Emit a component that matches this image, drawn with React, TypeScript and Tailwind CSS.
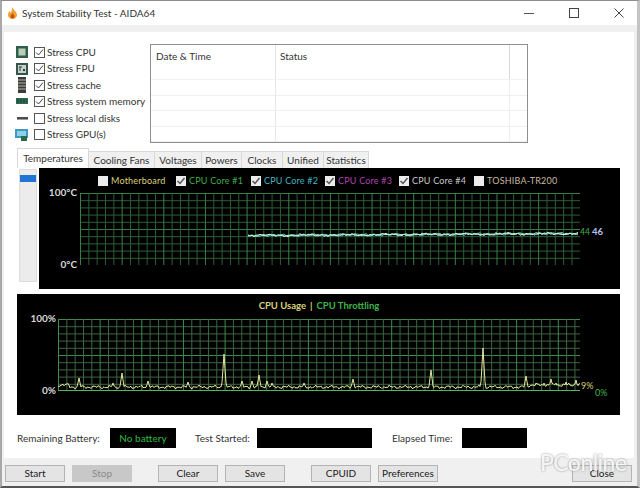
const FONT = { fontFamily: 'Lato, Roboto, sans-serif' };

const stressItems = [
  { label: "Stress CPU", checked: true, icon: "cpu" },
  { label: "Stress FPU", checked: true, icon: "fpu" },
  { label: "Stress cache", checked: true, icon: "cache" },
  { label: "Stress system memory", checked: true, icon: "memory" },
  { label: "Stress local disks", checked: false, icon: "disk" },
  { label: "Stress GPU(s)", checked: false, icon: "gpu" },
];

const tabs = [
  { label: "Cooling Fans", width: "w-[66px]" },
  { label: "Voltages", width: "w-[47px]" },
  { label: "Powers", width: "w-[40px]" },
  { label: "Clocks", width: "w-[41px]" },
  { label: "Unified", width: "w-[41px]" },
  { label: "Statistics", width: "w-[45px]" },
];

const legend = [
  { label: "Motherboard", checked: false, color: "text-[#d8d27a]", width: "w-[78px]" },
  { label: "CPU Core #1", checked: true, color: "text-[#3fae4c]", width: "w-[75px]" },
  { label: "CPU Core #2", checked: true, color: "text-[#45b5c0]", width: "w-[74px]" },
  { label: "CPU Core #3", checked: true, color: "text-[#b044b0]", width: "w-[74px]" },
  { label: "CPU Core #4", checked: true, color: "text-[#c8c8c8]", width: "w-[75px]" },
  { label: "TOSHIBA-TR200", checked: false, color: "text-[#c8b8a0]", width: "w-[90px]" },
];

function StressIcon({ kind }: { kind: string }) {
  if (kind === "cpu")
    return (
      <svg width="14" height="14" viewBox="0 0 14 14">
        <rect x="1" y="1" width="12" height="12" fill="#2f5f4a" />
        <rect x="3.5" y="3.5" width="7" height="7" fill="#b9cdb8" />
      </svg>
    );
  if (kind === "fpu")
    return (
      <svg width="14" height="14" viewBox="0 0 14 14">
        <rect x="1" y="1" width="12" height="12" fill="#35554c" />
        <rect x="3" y="3" width="8" height="8" fill="#c5d2cc" />
        <path d="M4 5h3M5 5v4M8 7l2 2M10 7l-2 2" stroke="#2c3c38" strokeWidth="1" fill="none" />
      </svg>
    );
  if (kind === "cache")
    return (
      <svg width="14" height="16" viewBox="0 0 14 16">
        <rect x="3" y="0" width="8" height="16" fill="#3b3b3b" />
        <path d="M3 3h8M3 6h8M3 9h8M3 12h8" stroke="#b5b5a8" strokeWidth="1" />
      </svg>
    );
  if (kind === "memory")
    return (
      <svg width="14" height="10" viewBox="0 0 14 10">
        <rect x="1" y="1" width="12" height="6" fill="#2f6a52" />
        <path d="M2 3h10M2 5h10" stroke="#1c3a30" strokeWidth="1" strokeDasharray="2 1" />
      </svg>
    );
  if (kind === "disk")
    return (
      <svg width="14" height="8" viewBox="0 0 14 8">
        <rect x="2" y="3" width="11" height="3" fill="#4b4b4b" />
        <rect x="2" y="5" width="11" height="1" fill="#9a9a9a" />
      </svg>
    );
  return (
    <svg width="14" height="14" viewBox="0 0 14 14">
      <rect x="0" y="1" width="13" height="9" fill="#3c9ac4" />
      <rect x="2" y="3" width="9" height="5" fill="#8fd0e6" />
      <rect x="6" y="8" width="6" height="5" fill="#2a6b4c" />
    </svg>
  );
}

function Checkbox({ checked, dark }: { checked: boolean; dark?: boolean }) {
  if (dark) {
    return (
      <span className="w-[10px] h-[10px] bg-[#ececec] flex items-center justify-center shrink-0">
        {checked && (
          <svg width="10" height="10" viewBox="0 0 10 10">
            <path d="M1.5 5l2.5 2.5L8.5 2" stroke="#555" strokeWidth="1.5" fill="none" />
          </svg>
        )}
      </span>
    );
  }
  return (
    <span className="w-[11px] h-[11px] border border-[#555] bg-white flex items-center justify-center shrink-0">
      {checked && (
        <svg width="9" height="9" viewBox="0 0 9 9">
          <path d="M1 4.5l2.5 2.5L8 1.5" stroke="#444" strokeWidth="1" fill="none" />
        </svg>
      )}
    </span>
  );
}

function GridLines({ w, h, dx, dy, color, strong }: { w: number; h: number; dx: number; dy: number; color: string; strong: string }) {
  const xs: number[] = [];
  for (let x = 0.5; x <= w; x += dx) xs.push(x);
  const ys: number[] = [];
  for (let y = 0.5; y <= h; y += dy) ys.push(y);
  return (
    <g strokeWidth="1">
      {ys.map((y, i) => (
        <line key={"h" + i} x1="0" x2={w} y1={y} y2={y} stroke={i % 5 === 0 ? strong : color} />
      ))}
      {xs.map((x, i) => (
        <line key={"v" + i} x1={x} x2={x} y1="0" y2={h} stroke={i % 5 === 0 ? strong : color} />
      ))}
    </g>
  );
}

// small repeatable wobble so the traces look like sensor data
function wobble(i: number) {
  return Math.sin(i * 1.7) * 0.5 + Math.sin(i * 0.61 + 1) * 0.5 + Math.sin(i * 3.3) * 0.4;
}

function tempTrace(offset: number) {
  let d = "";
  for (let x = 168; x <= 499; x += 2) {
    const y = 42.5 - (x - 168) * 0.006 + wobble(x + offset) * 1.2;
    d += (d ? "L" : "M") + x + " " + y.toFixed(1);
  }
  return d;
}

const spikes: [number, number][] = [
  [21, 12], [55, 7], [64, 17], [90, 9], [130, 8], [166, 36], [184, 9], [194, 9], [201, 15], [209, 9], [214, 7],
  [246, 7], [295, 11], [373, 20], [425, 42], [468, 14], [478, 7], [486, 7], [493, 11], [498, 7], [508, 8], [518, 10],
];

function cpuTrace() {
  let d = "";
  for (let x = 0; x <= 522; x += 1) {
    let y = 68 + wobble(x * 0.7) * 1.5;
    if (x < 12 || x > 470) y -= 2;
    for (const [sx, sh] of spikes) {
      const dist = Math.abs(x - sx);
      if (dist < 2.5) y = Math.min(y, 71 - sh * (1 - dist / 2.5));
    }
    d += (d ? "L" : "M") + x + " " + y.toFixed(1);
  }
  return d;
}

function Field({ label, value, box, labelWidth }: { label: string; value?: string; box: string; labelWidth: string }) {
  return (
    <div className="flex items-center">
      <span className={`${labelWidth} whitespace-nowrap text-[10px] text-[#333]`}>{label}</span>
      <div className={`${box} h-[20px] bg-black flex items-center justify-center text-[10px] font-medium text-[#2fae3f]`}>{value}</div>
    </div>
  );
}

function Btn({ label, disabled, className }: { label: string; disabled?: boolean; className?: string }) {
  return (
    <div
      className={`w-[60px] h-[17px] flex items-center justify-center border text-[10px] ${
        disabled ? "bg-[#c8c8c8] border-[#c8c8c8] text-[#8a8a8a]" : "bg-[#e4e4e4] border-[#b4b4b4] text-[#222]"
      } ${className ?? ""}`}
    >
      {label}
    </div>
  );
}

export default function App() {
  return (
    <div style={FONT} className="relative w-[640px] h-[488px] overflow-hidden bg-[#f0f0f0] border-l-2 border-r-[3px] border-t border-b-2 border-l-[#a8a8a8] border-r-[#c4c4c4] border-t-[#8c8c8c] border-b-[#555] flex flex-col">
      {/* Title bar */}
      <div className="h-[24px] shrink-0 bg-white flex items-center pl-[5px] text-[10px] text-[#333]">
        <svg width="11" height="12" viewBox="0 0 11 12">
          <path d="M5.5 0C6 3 10 4.5 10 8a4.5 4 0 0 1-9 0c0-2 1-3 1.5-4 .5 1 1 1.5 1.5 1.5C4.500 4 5 2 5.500 0z" fill="#f0a030" />
          <path d="M5.500 6c.5 1 2 2 2 3.500a2 2 0 0 1-4 0C3.500 8 5 7.500 5.500 6z" fill="#c8501c" />
        </svg>
        <span className="ml-[4px]">System Stability Test - AIDA64</span>
        <div className="ml-auto flex items-center">
          <svg width="12" height="12" viewBox="0 0 12 12" className="mr-[33px]"><path d="M1 6.500h10" stroke="#555" /></svg>
          <svg width="12" height="12" viewBox="0 0 12 12" className="mr-[33px]"><rect x="1.500" y="1.500" width="9" height="9" fill="none" stroke="#444" /></svg>
          <svg width="12" height="12" viewBox="0 0 12 12" className="mr-[12px]"><path d="M1.500 1.500l9 9M10.500 1.500l-9 9" stroke="#444" /></svg>
        </div>
      </div>

      {/* Main body */}
      <div className="h-[7px] shrink-0" />
      <div className="h-[426px] shrink-0 bg-white ml-[2px] mr-[3px] flex flex-col">
        {/* Top section: stress options and log */}
        <div className="h-[116px] shrink-0 flex pt-[12px]">
          <div className="w-[146px] shrink-0 pl-[9px] flex flex-col">
            {stressItems.map((item) => (
              <div key={item.label} className="h-[16.500px] flex items-center text-[10px] text-[#333]">
                <span className="w-[18px] flex items-center justify-center shrink-0">
                  <StressIcon kind={item.icon} />
                </span>
                <span className="ml-[3px]">
                  <Checkbox checked={item.checked} />
                </span>
                <span className="ml-[2px] whitespace-nowrap">{item.label}</span>
              </div>
            ))}
          </div>
          <div className="w-[378px] h-[99px] border border-[#8f8f8f] flex flex-col">
            <div className="h-[35px] flex text-[10px] text-[#333] border-b border-[#f2f2f2]">
              <span className="w-[125px] pl-[5px] pt-[4px] border-r border-[#e4e4e4]">Date &amp; Time</span>
              <span className="w-[234px] pl-[4px] pt-[4px] border-r border-[#d8d8d8]">Status</span>
            </div>
            {[0, 1, 2, 3].map((i) => (
              <div key={i} className="h-[15.500px] flex border-b border-[#efefef]">
                <span className="w-[125px] border-r border-[#e8e8e8]" />
                <span className="w-[234px] border-r border-[#eeeeee]" />
              </div>
            ))}
          </div>
        </div>

        {/* Tabs */}
        <div className="h-[19px] shrink-0 flex items-end pl-[13px] mt-[1px] text-[10px] text-[#333] whitespace-nowrap">
          <div className="w-[72px] h-[20px] bg-white border-t border-l border-r border-[#d8d8d8] flex items-center justify-center">Temperatures</div>
          {tabs.map((t) => (
            <div key={t.label} className={`${t.width} h-[17px] bg-[#f0f0f0] border-t border-r border-[#d8d8d8] flex items-center justify-center`}>
              {t.label}
            </div>
          ))}
        </div>

        {/* Temperature panel */}
        <div className="h-[121px] shrink-0 flex pl-[15px]">
          <div className="w-[20px] shrink-0 pt-[1px]">
            <div className="w-[18px] h-[113px] bg-[#ececec] border border-[#dcdcdc]">
              <div className="mt-[5px] h-[7px] bg-[#1f74d4]" />
            </div>
          </div>
          <div className="relative w-[581px] h-[121px] bg-black">
            <div className="h-[25px] flex items-center pl-[59px] text-[9px] tracking-[0.2px] whitespace-nowrap">
              {legend.map((l) => (
                <div key={l.label} className={`${l.width} flex items-center`}>
                  <Checkbox checked={l.checked} dark />
                  <span className={`ml-[3px] ${l.color}`}>{l.label}</span>
                </div>
              ))}
            </div>
            <div className="flex">
              <div className="w-[41px] h-[82px] flex flex-col justify-between items-end pr-[3px] text-[10px] leading-none text-[#d8d8d8] font-bold -mt-[6px]">
                <span>100°C</span>
                <span>0°C</span>
              </div>
              <svg width="501" height="73" viewBox="0 0 501 73" className="block">
                <GridLines w={500} h={72} dx={8.33} dy={7.2} color="#2c5f35" strong="#3a8046" />
                <path d={tempTrace(0)} stroke="#e8e8e8" fill="none" strokeWidth="1" />
                <path d={tempTrace(9)} stroke="#55d0c0" fill="none" strokeWidth="1" />
                <path d={tempTrace(23)} stroke="#c8f0d8" fill="none" strokeWidth="1" />
              </svg>
            </div>
            <span className="absolute left-[541px] top-[60px] text-[8.500px] leading-none text-[#3fae4c]">44</span>
            <span className="absolute left-[553px] top-[59px] text-[9.500px] leading-none font-bold text-[#b8c4ee]">46</span>
          </div>
        </div>

        {/* CPU usage panel */}
        <div className="relative h-[121px] w-[603px] shrink-0 ml-[13px] mt-[5px] bg-black">
          <div className="h-[25px] flex items-center justify-center text-[9.500px] font-bold whitespace-nowrap pl-[1px]">
            <span className="text-[#d8d27a]">CPU Usage</span>
            <span className="text-[#d8d27a] mx-[4px]">|</span>
            <span className="text-[#3fb54c]">CPU Throttling</span>
          </div>
          <div className="flex">
            <div className="w-[41px] h-[82px] flex flex-col justify-between items-end pr-[2px] text-[10px] leading-none text-[#d8d8d8] font-bold -mt-[6px]">
              <span>100%</span>
              <span>0%</span>
            </div>
            <svg width="523" height="73" viewBox="0 0 523 73" className="block">
              <GridLines w={522} h={72} dx={8.33} dy={7.2} color="#3c6644" strong="#3f8a4c" />
              <line x1="0" x2="522" y1="71.500" y2="71.500" stroke="#4fb860" />
              <path d={cpuTrace()} stroke="#e6e69a" fill="none" strokeWidth="1" />
            </svg>
          </div>
          <span className="absolute left-[564px] top-[87px] text-[9px] leading-none text-[#d8d27a]">9%</span>
          <span className="absolute left-[578px] top-[94px] text-[9px] leading-none text-[#3fb54c]">0%</span>
        </div>

        {/* Status fields */}
        <div className="flex items-center pl-[13px] mt-[13px] h-[20px] shrink-0">
          <Field label="Remaining Battery:" value="No battery" labelWidth="w-[93px]" box="w-[66px]" />
          <div className="w-[19px]" />
          <Field label="Test Started:" labelWidth="w-[62px]" box="w-[115px]" />
          <div className="w-[20px]" />
          <Field label="Elapsed Time:" labelWidth="w-[70px]" box="w-[65px]" />
        </div>
      </div>

      {/* Bottom buttons */}
      <div className="flex items-center pl-[3px] pt-[7px] shrink-0">
        <Btn label="Start" />
        <Btn label="Stop" disabled className="ml-[7px]" />
        <Btn label="Clear" className="ml-[26px]" />
        <Btn label="Save" className="ml-[7px]" />
        <Btn label="CPUID" className="ml-[26px]" />
        <Btn label="Preferences" className="ml-[7px]" />
        <Btn label="Close" className="ml-[134px]" />
      </div>

      {/* Watermark */}
      <span className="absolute left-[538px] top-[450px] text-[23px] leading-none text-white/85 font-medium tracking-tight drop-shadow-[0_0_1px_rgba(110,110,110,0.8)]">PConline</span>
    </div>
  );
}
